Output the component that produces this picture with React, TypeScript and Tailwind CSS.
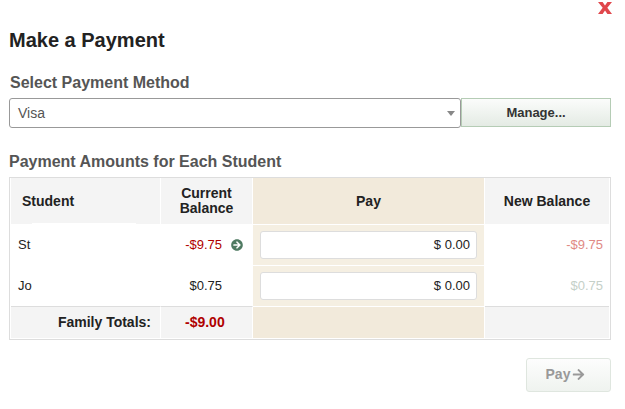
import React from 'react';
import { FaArrowRight, FaArrowCircleRight } from 'react-icons/fa';

const font = "font-['Liberation_Sans',Arial,sans-serif]";

const rows = [
  { name: 'St', balance: '-$9.75', newBalance: '-$9.75', negative: true },
  { name: 'Jo', balance: '$0.75', newBalance: '$0.75', negative: false },
];

const App: React.FC = () => {
  return (
    <div className={`${font} relative w-[625px] h-[409px] bg-white overflow-hidden pl-[9px] pt-[29px] pr-[14px]`}>
      {/* Close */}
      <button className="absolute left-[598px] top-[2px] w-[14px] h-[12px]">
        <svg viewBox="0 0 14 12" className="block w-[14px] h-[12px]">
          <path d="M0 0H4.6L7 3.4L9.4 0H14L9.3 5.8L14 12H9.4L7 8.4L4.6 12H0L4.7 5.8Z" fill="#e0474c" />
        </svg>
      </button>

      <h1 className="text-[20px] leading-[23px] font-bold text-[#222]">Make a Payment</h1>

      <h2 className="mt-[22px] ml-[1px] text-[16px] leading-[18px] font-bold text-[#555]">Select Payment Method</h2>

      {/* Method select */}
      <div className="mt-[6px] flex items-start">
        <div className="relative flex h-[30px] w-[452px] items-center rounded-[3px] border border-[#999] bg-white pl-[8px] text-[14px] text-[#555]">
          Visa
          <span className="absolute right-[5px] top-[12px] h-0 w-0 border-x-[4px] border-t-[5px] border-x-transparent border-t-[#888]" />
        </div>
        <button className="h-[29px] w-[150px] border border-[#b5ccb5] bg-gradient-to-b from-[#fbfcfb] to-[#e4ebe4] text-[13px] font-bold text-[#333]">
          Manage...
        </button>
      </div>

      <h2 className="mt-[25px] text-[16px] leading-[18px] font-bold text-[#555]">Payment Amounts for Each Student</h2>

      {/* Amounts table */}
      <div className="mt-[6px] w-[602px] border border-[#ddd] px-px pb-px text-[13px] text-[#222]">
        <div className="grid grid-cols-[150px_92px_232px_124px] grid-rows-[46px_41px_41px_32px]">
          <div className="relative flex items-center bg-[#f4f4f4] pl-[11px] text-[14px] font-bold border-r border-white">
            Student
            <span className="absolute bottom-0 left-[21px] h-px w-[104px] bg-white" />
          </div>
          <div className="flex items-center justify-center bg-[#f4f4f4] text-center text-[14px] leading-[15px] font-bold border-r border-white">
            Current<br />Balance
          </div>
          <div className="flex items-center justify-center bg-[#f2eadb] text-[14px] font-bold border-r border-white">Pay</div>
          <div className="flex items-center justify-center bg-[#f4f4f4] text-[14px] font-bold">New Balance</div>

          {rows.map((row) => (
            <React.Fragment key={row.name}>
              <div className="flex items-center pl-[7px]">{row.name}</div>
              <div className={`flex items-center pl-[15px] ${row.negative ? 'text-[#b00000]' : ''}`}>
                <span className="w-[46px] text-right">{row.balance}</span>
                {row.negative && <FaArrowCircleRight size={12} color="#4f7a62" className="ml-[9px]" />}
              </div>
              <div className="flex items-center border-r border-t border-white bg-[#f5efe2] px-[7px]">
                <div className="flex h-[28px] w-full items-center justify-end rounded-[3px] border border-[#ddd] bg-white pr-[6px]">
                  $ 0.00
                </div>
              </div>
              <div className={`flex items-center justify-end pr-[6px] ${row.negative ? 'text-[#e08a85]' : 'text-[#c5d0c8]'}`}>
                {row.newBalance}
              </div>
            </React.Fragment>
          ))}

          <div className="flex items-center justify-end border-t border-r border-t-[#ddd] border-r-white bg-[#f4f4f4] pr-[9px] text-[14px] font-bold">Family Totals:</div>
          <div className="flex items-center border-t border-r border-t-[#ddd] border-r-white bg-[#f4f4f4] pl-[24px] text-[14px] font-bold text-[#b00000]">-$9.00</div>
          <div className="border-t border-r border-t-white border-r-white bg-[#f2eadb]" />
          <div className="border-t border-[#ddd] bg-[#f4f4f4]" />
        </div>
      </div>

      <div className="mt-[18px] flex w-[602px] justify-end">
        <button className="flex h-[34px] w-[85px] items-center justify-center gap-[2px] rounded-[3px] border border-[#dfe6df] bg-gradient-to-b from-[#fdfdfd] to-[#eff3ef] pr-[6px] pb-px text-[14px] font-bold text-[#999]">
          Pay <FaArrowRight size={13} />
        </button>
      </div>
    </div>
  );
};

export default App;
